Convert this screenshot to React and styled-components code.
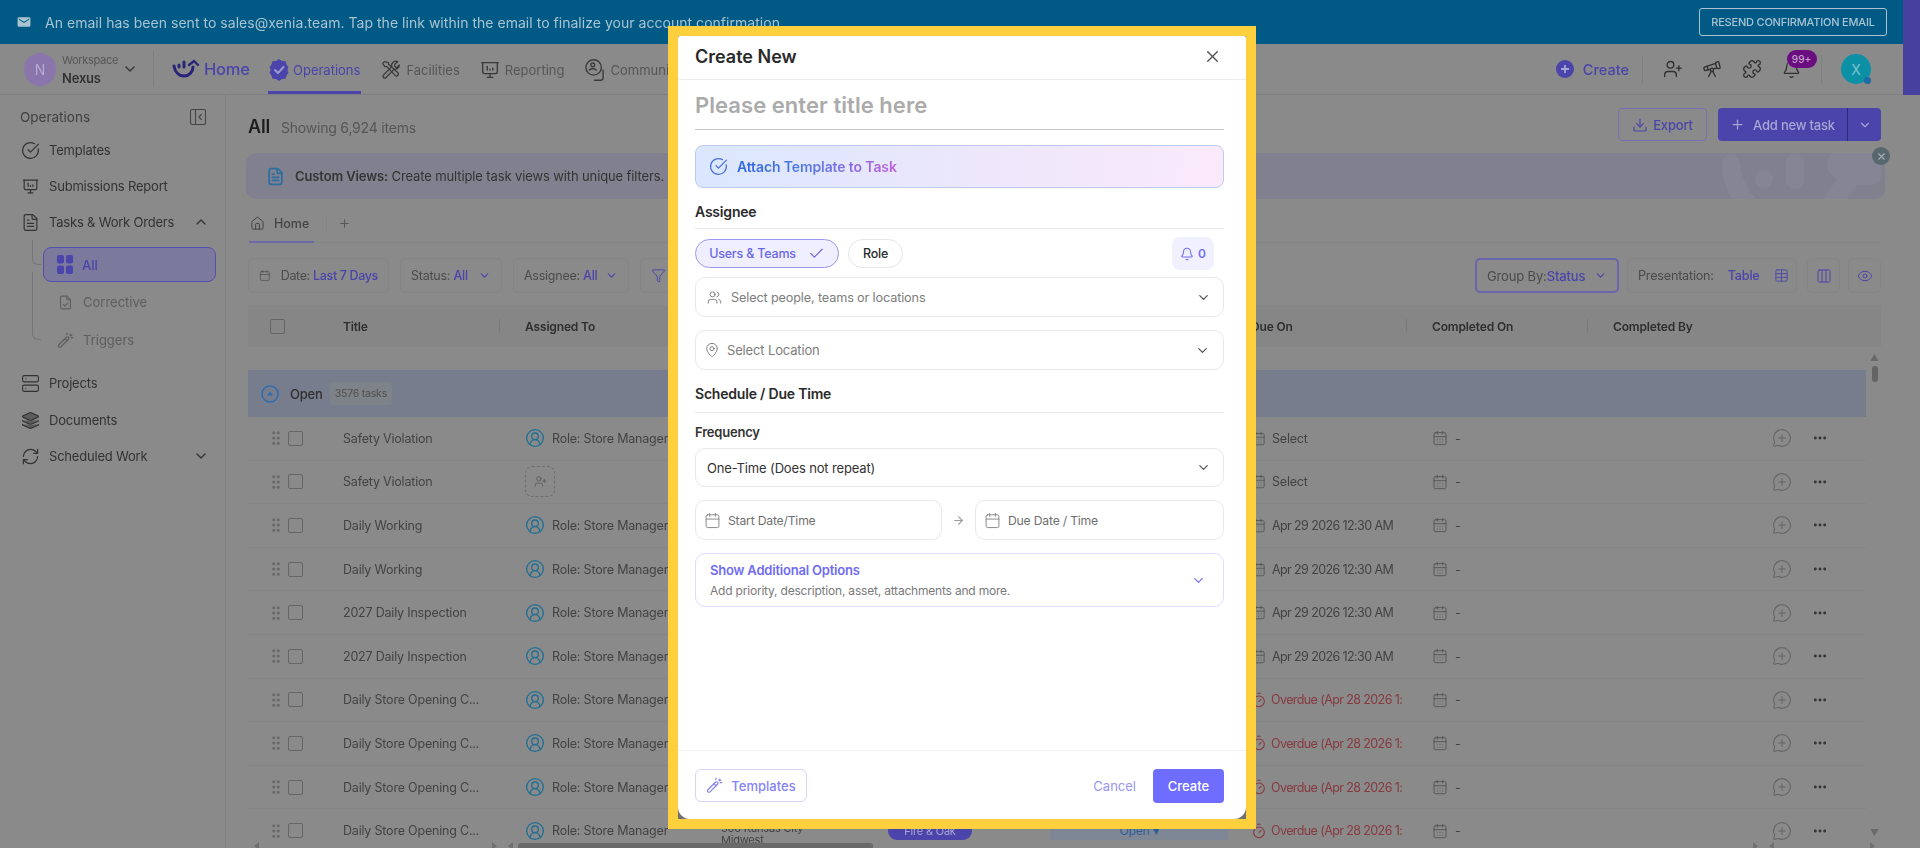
import React from "react";
import styled, { createGlobalStyle } from "styled-components";
import {
  ChevronDown, ChevronUp, CircleCheckBig, FileText, Layers, Server, RefreshCw,
  PanelLeftClose, UserPlus, Telescope, Puzzle, Bell, Download, Plus, Table, Columns3, Eye, Calendar, CalendarDays,
  CircleUserRound, MessageCirclePlus, Ellipsis, Timer, GripVertical, X, Check, Users, MapPin, ArrowRight, Filter,
  House,
} from "lucide-react";
import { TbPresentationAnalytics, TbFileCheck } from "react-icons/tb";

const c = {
  page: "#8a8a8a", line: "#7f7f7f", soft: "#858585", text: "#333333", mute: "#565656", faint: "#5e5e5e",
  primary: "#4a44ab", teal: "#1f6f94", red: "#873a3f",
};
const font = `Inter, "Noto Sans", "Liberation Sans", sans-serif`;

const Global = createGlobalStyle`
  html, body { margin: 0; padding: 0; width: 1920px; height: 848px; overflow: hidden; background: ${c.page}; }
  * { box-sizing: border-box; }
  body { font-family: ${font}; color: ${c.text}; }
`;

const Shell = styled.div`display: flex; width: 1920px; height: 848px; overflow: hidden; filter: blur(0.45px);`;
const Page = styled.div`width: 1903px; height: 848px; display: flex; flex-direction: column;`;
const Rail = styled.div`width: 17px; height: 95px; background: #48409f;`;

const Banner = styled.div`
  height: 44px; background: #005a85; display: flex; align-items: center; padding: 0 16px 0 17px; color: #a9c3d1; flex: none;
`;
const BannerText = styled.span`font-size: 14px; margin-left: 14px; letter-spacing: 0.03px;`;
const Resend = styled.div`
  margin-left: auto; width: 188px; height: 28px; border: 1px solid #a9c3d1; border-radius: 3px; font-size: 11px; font-weight: 500;
  display: flex; align-items: center; justify-content: center; white-space: nowrap; letter-spacing: -0.2px;
`;

const Header = styled.header`
  height: 51px; display: flex; align-items: center; border-bottom: 1px solid ${c.line}; flex: none; padding-left: 24px; position: relative;
`;
const WsAvatar = styled.div`
  width: 32px; height: 33px; border-radius: 50%; background: #8a76ad; color: #b7a9d2; font-size: 14px; display: flex; align-items: center; justify-content: center;
`;
const WsInfo = styled.div`margin-left: 6px; width: 60px; display: flex; flex-direction: column; gap: 3px;`;
const WsLabel = styled.span`font-size: 11px; color: ${c.mute}; letter-spacing: -0.3px;`;
const WsName = styled.span`font-size: 13px; font-weight: 600; color: ${c.text}; letter-spacing: -0.2px;`;
const VLine = styled.div`width: 1px; height: ${p => p.$h || 36}px; background: ${c.line}; margin: ${p => p.$m || "0"};`;
const HomeLink = styled.div`display: flex; align-items: center; gap: 4px; font-size: 16.5px; font-weight: 500; color: ${c.primary}; width: 96px; letter-spacing: -0.2px;`;
const Nav = styled.nav`display: flex; height: 100%;`;
const NavItem = styled.div`
  display: flex; align-items: center; gap: ${p => p.$gap || 4}px; font-size: 13px; padding: 1px 1px 0; margin-right: ${p => p.$mr ?? 19}px; height: 50px;
  color: ${p => (p.$active ? c.primary : c.mute)}; position: relative; letter-spacing: 0;
  box-shadow: ${p => (p.$active ? `inset 0 -3px 0 ${c.primary}` : "none")};
  svg { color: ${p => (p.$active ? c.primary : "#3a3a3a")}; }
`;
const HeadRight = styled.div`margin-left: auto; display: flex; align-items: center; padding-right: 32px; height: 100%;`;
const CreateLink = styled.div`display: flex; align-items: center; gap: 9px; font-size: 14.5px; font-weight: 500; color: ${c.primary}; margin-right: 13px;`;
const HeadIcon = styled.div`width: 39.5px; display: flex; justify-content: center; color: #303030; position: relative;`;
const Badge = styled.span`
  position: absolute; left: 15px; top: -10px; width: 30px; height: 18px; border-radius: 9px; background: #6a0d80; color: #c3a3cb;
  font-size: 10px; font-weight: 500; display: flex; align-items: center; justify-content: center;
`;
const UserDot = styled.div`
  margin-left: 19px; width: 30px; height: 30px; border-radius: 50%; background: #0c90a6; color: #7fc3cf; font-size: 14px;
  display: flex; align-items: center; justify-content: center; position: relative;
  &::after { content: ""; position: absolute; right: 0; bottom: 0; width: 7px; height: 7px; border-radius: 50%; background: #1c6ca8; }
`;

const Body = styled.div`display: flex; flex: 1; min-height: 0;`;
const Side = styled.aside`width: 226px; flex: none; border-right: 1px solid ${c.line}; padding: 10px 9px 0 20px; position: relative;`;
const SideHead = styled.div`display: flex; align-items: center; justify-content: space-between; height: 24px; font-size: 13.5px; margin-bottom: 3px; color: #3f3f3f;`;
const SideItem = styled.div`
  height: 36px; display: flex; align-items: center; gap: 9px; font-size: 13px; color: ${c.text}; padding-left: 1px; letter-spacing: -0.2px;
  svg:last-child:not(:first-child) { margin-left: auto; margin-right: 7px; }
  margin-top: ${p => p.$mt || 0}px;
`;
const SubList = styled.div`
  margin: 3px 0 0 12px; padding-left: 11px; height: 116px; display: flex; flex-direction: column; position: relative;
`;
const TreeLine = styled.span`
  position: absolute; left: 0; top: ${p => p.$top}px; width: 9px; height: ${p => p.$h}px;
  border-left: 1px solid #767676; border-bottom: 1px solid #767676; border-bottom-left-radius: 6px;
`;
const SubActive = styled.div`
  height: 35px; width: 173px; flex: none; margin-top: 4px; border: 1px solid #574fae; border-radius: 8px; background: #7b7a9c; display: flex; align-items: center;
  gap: 9px; padding-left: 13px; font-size: 13px; font-weight: 500; color: ${c.primary};
`;
const SubItem = styled.div`
  height: 38px; flex: none; margin-top: ${p => p.$mt || 0}px; display: flex; align-items: center; gap: 9px; padding-left: 14px; font-size: 13px; color: ${c.faint};
`;

const Main = styled.main`flex: 1; min-width: 0; padding: 13px 22px 0 22px; display: flex; flex-direction: column;`;
const TitleRow = styled.div`height: 33px; display: flex; align-items: center; flex: none;`;
const PageTitle = styled.h1`margin: 4px 0 0; font-size: 18px; font-weight: 600; color: #1d1d1d; letter-spacing: -0.2px;`;
const Showing = styled.span`margin: 5px 0 0 11px; font-size: 14px; color: ${c.mute}; letter-spacing: -0.2px;`;
const TitleActions = styled.div`margin-left: auto; display: flex; gap: 11px;`;
const ExportBtn = styled.div`
  width: 89px; height: 33px; border: 1px solid #7671b2; border-radius: 4px; display: flex; align-items: center; justify-content: center; gap: 5px;
  font-size: 13px; font-weight: 500; color: ${c.primary}; letter-spacing: -0.15px;
`;
const AddBtn = styled.div`
  width: 163px; height: 33px; background: ${c.primary}; border-radius: 4px; display: flex; color: #a8a6d4; font-size: 13px; font-weight: 500; overflow: hidden;
`;
const AddMain = styled.div`width: 130px; display: flex; align-items: center; justify-content: center; gap: 8px; border-right: 1px solid #2f2a78; letter-spacing: -0.2px;`;
const AddArrow = styled.div`flex: 1; display: flex; align-items: center; justify-content: center;`;

const Promo = styled.div`
  height: 46px; margin: 12px -4px 0 -2px; border-radius: 10px; background: #80808f; display: flex; align-items: center; padding-left: 20px; gap: 10px;
  position: relative; flex: none; font-size: 13px; color: #343434; letter-spacing: -0.12px;
  b { font-weight: 600; }
`;
const PromoArt = styled.svg`position: absolute; right: 0; top: 0; width: 165px; height: 46px;`;
const PromoClose = styled.div`
  position: absolute; right: -5px; top: -6px; width: 18px; height: 18px; border-radius: 50%; background: #56686e; color: #a5b1b4;
  display: flex; align-items: center; justify-content: center;
`;

const Tabs = styled.div`height: 44px; flex: none; display: flex; align-items: center; border-bottom: 1px solid ${c.soft}; color: ${c.mute};`;
const HomeTab = styled.div`
  height: 44px; width: 65px; padding: 6px 0 0 1px; margin-left: 1px; display: flex; align-items: center; gap: 9px; font-size: 12.5px; font-weight: 500; color: #444;
  box-shadow: inset 0 -2px 0 #6d69a8;
`;
const TabAdd = styled.div`margin: 6px 0 0 12px; border-left: 1px solid ${c.soft}; padding-left: 11px; height: 16px; display: flex; align-items: center;`;

const Filters = styled.div`height: 35px; margin-top: 15px; display: flex; flex: none; align-items: stretch;`;
const Spacer = styled.div`flex: 1;`;
const Chip = styled.div`
  width: ${p => p.$w}px; margin-right: ${p => p.$mr ?? 11}px; border-style: solid; border-color: ${p => (p.$on ? "#6864ad" : c.soft)}; border-width: ${p => (p.$on ? 2 : 1)}px;
  border-radius: 5px; display: flex; align-items: center; justify-content: ${p => p.$center ? "center" : "flex-start"}; padding: ${p => p.$center ? "0" : `0 ${p.$pr ?? 10}px 0 10px`}; gap: ${p => p.$gap ?? 5}px;
  font-size: ${p => p.$fs || 12.5}px; color: #4b4b4b; letter-spacing: ${p => p.$ls ?? -0.25}px; flex: none; white-space: nowrap;
  em { font-style: normal; color: ${c.primary}; font-weight: 500; }
  svg.end { margin-left: auto; color: ${c.primary}; }
`;

const TableHead = styled.div`
  height: 42px; margin-top: 12px; background: #868686; display: grid; grid-template-columns: ${p => p.$cols}; align-items: center; flex: none;
  font-size: 12px; font-weight: 600; color: #2e2e2e; letter-spacing: -0.15px;
`;
const HCell = styled.div`display: flex; align-items: center; padding-left: ${p => p.$pl || 0}px; position: relative; height: 16px;
  &::after { content: ""; position: absolute; right: ${p => p.$sep ?? 26}px; top: 1px; width: 1px; height: 13px; background: ${p => p.$nosep ? "transparent" : "#7a7a7a"}; }
`;
const Box = styled.span`display: block; width: 15px; height: 15px; border: 1.5px solid #656565; border-radius: 2px; flex: none;`;

const TableArea = styled.div`flex: 1; min-height: 0; display: flex; position: relative; overflow: hidden;`;
const Rows = styled.div`width: 1618px; flex: none; padding-top: 23px;`;
const GroupRow = styled.div`height: 47px; background: #777d8c; display: flex; align-items: center; padding-left: 13px; font-size: 13px; color: #2f2f2f; font-weight: 500; letter-spacing: -0.2px;`;
const GroupName = styled.span`margin-left: 11px;`;
const Count = styled.span`
  margin-left: 7px; height: 23px; padding: 0 5px; background: #7e8289; border-radius: 3px; font-size: 10.5px; display: flex; align-items: center; color: #4f4f4f; font-weight: 400;
`;
const Row = styled.div`
  height: 43.6px; display: grid; grid-template-columns: ${p => p.$cols}; align-items: center; border-bottom: 1px solid #858585; font-size: 12.5px; color: #434343; letter-spacing: -0.2px;
`;
const Pick = styled.div`display: flex; align-items: center; gap: 3px; padding-left: 19px; color: #686868;`;
const Cell = styled.div`display: flex; align-items: center; gap: ${p => p.$gap || 6}px; white-space: nowrap; overflow: hidden; height: 100%; color: ${p => p.$red ? c.red : "inherit"};`;
const DateText = styled.span`letter-spacing: -0.6px;`;
const Unassigned = styled.div`width: 30px; height: 31px; border: 1px dashed #6f6f6f; border-radius: 7px; display: flex; align-items: center; justify-content: center; color: #5a5a5a;`;
const Loc = styled.div`white-space: pre-line; line-height: 12px; font-size: 11px; padding-top: 6px;`;
const Tag = styled.div`width: 84px; height: 18px; background: ${c.primary}; border-radius: 9px; color: #a8a6d4; font-size: 11px; display: flex; align-items: center; justify-content: center;`;
const StatusPill = styled.div`width: 178px; height: 18px; background: #7e8796; color: #2b5f96; font-size: 12px; display: flex; align-items: center; justify-content: center;`;
const RowIcons = styled.div`display: flex; align-items: center; gap: 20px; color: #666; padding-left: 3px;
  svg:last-child { color: #333; }`;
const VScroll = styled.div`
  width: 13px; margin-left: 2px; flex: none; display: flex; flex-direction: column; align-items: center; padding-top: 6px; color: #6a6a6a; font-size: 9px; line-height: 9px;
`;
const Thumb = styled.div`width: 6px; height: 16px; margin-top: 4px; background: #646464; border-radius: 3px;`;
const Down = styled.div`margin-top: auto; margin-bottom: 11px;`;
const HTrack = styled.div`position: absolute; left: 0; right: 0; bottom: 0; height: 5px; display: flex; align-items: center;`;
const HThumb = styled.div`margin-left: 5px; width: 355px; height: 5px; background: #6a6a6a; border-radius: 3px 3px 0 0;`;
const Tri = styled.span`
  width: 0; height: 0; margin-left: ${p => p.$ml}px; border-top: 4px solid transparent; border-bottom: 4px solid transparent;
  ${p => p.$dir === "l" ? "border-right: 5px solid #707070;" : "border-left: 5px solid #707070;"}
`;

/* Modal */
const Backdrop = styled.div`
  position: fixed; inset: 0; display: flex; justify-content: flex-start; align-items: flex-start; padding: 26px 0 0 668px;
`;
const Frame = styled.div`width: 588px; height: 803px; border: 10px solid #ffd03d; background: #707070;`;
const Modal = styled.section`
  width: 100%; height: 100%; background: #fff; border-radius: 2px 2px 12px 12px; display: flex; flex-direction: column; color: #1f1f1f;
`;
const ModalHead = styled.div`
  height: 44px; flex: none; border-bottom: 1px solid #ececec; display: flex; align-items: center; justify-content: space-between; padding: 0 24px 2px 17px;
  font-size: 18px; font-weight: 600; letter-spacing: 0; color: #2a2a2a;
  svg { color: #555; }
`;
const ModalBody = styled.div`flex: 1; padding: 0 22px 0 17px; display: flex; flex-direction: column;`;
const TitleField = styled.div`
  height: 50px; flex: none; border-bottom: 1px solid #c8c8c8; display: flex; align-items: center; font-size: 22px; font-weight: 600; color: #ababab; letter-spacing: 0.05px;
`;
const Attach = styled.div`
  height: 43px; margin-top: 15px; flex: none; border-radius: 8px; border: 1px solid #bccbed; background: linear-gradient(95deg, #dae7fe 0%, #efe7fb 60%, #fae9fb 100%);
  display: flex; align-items: center; gap: 9px; padding-left: 13px; color: #4a72d8;
`;
const AttachText = styled.span`
  font-size: 14px; font-weight: 600; letter-spacing: -0.12px; background: linear-gradient(90deg, #2f66dd 0%, #4f7be0 40%, #c05de0 100%);
  -webkit-background-clip: text; background-clip: text; color: transparent;
`;
const Section = styled.div`
  height: ${p => p.$h}px; margin-top: ${p => p.$mt || 0}px; padding-top: ${p => p.$pt || 0}px; flex: none; border-bottom: 1px solid #e6e6e6; font-size: 14px; font-weight: 600; color: #2a2a2a; letter-spacing: -0.2px;
`;
const PillRow = styled.div`height: 33px; margin-top: 8px; flex: none; display: flex; align-items: center; gap: 9px;`;
const Pill = styled.div`
  height: 29px; width: ${p => p.$w}px; border-radius: 15px; border: 1px solid ${p => p.$on ? "#9b97f0" : "#e6e6e6"}; background: ${p => p.$on ? "#f0efff" : "#fff"};
  color: ${p => p.$on ? "#6a68e8" : "#2a2a2a"}; font-size: 12.5px; font-weight: 500; display: flex; align-items: center; justify-content: center; gap: 12px; letter-spacing: -0.2px;
`;
const BellChip = styled.div`
  margin-left: auto; margin-right: 10px; width: 42px; height: 33px; border-radius: 8px; background: #f1f0ff; color: #7370f0; font-size: 12px; font-weight: 600;
  display: flex; align-items: center; justify-content: center; gap: 4px;
`;
const Select = styled.div`
  height: ${p => p.$h || 40}px; margin-top: ${p => p.$mt}px; flex: none; border: 1px solid #e8e8e8; border-radius: 10px; display: flex; align-items: center;
  gap: ${p => p.$gap || 8}px; padding: 0 ${p => p.$pr ?? 12}px 0 ${p => p.$pl || 11}px; font-size: ${p => p.$fs || 12.7}px; color: ${p => p.$dark ? "#333" : "#7d7d7d"}; letter-spacing: -0.15px;
  svg { color: #7a7a7a; flex: none; }
  svg.end { margin-left: auto; color: #555; }
`;
const Frequency = styled.div`height: 35px; flex: none; padding-top: 11px; font-size: 13px; font-weight: 600; color: #333; letter-spacing: -0.2px;`;
const DateRow = styled.div`height: 40px; margin-top: 13px; flex: none; display: flex; align-items: center; gap: 10px; color: #9a9a9a;`;
const DateBox = styled.div`
  height: 40px; width: ${p => p.$w}px; border: 1px solid #e8e8e8; border-radius: 10px; display: flex; align-items: center; gap: 7px; padding-left: 8px; font-size: 12.2px; color: #6f6f6f; letter-spacing: -0.2px;
  svg { color: #8a8a8a; }
`;
const More = styled.div`
  height: 54px; margin-top: 13px; flex: none; border: 1px solid #dedcfa; border-radius: 10px; padding: 0 17px 0 14px; display: flex; align-items: center; justify-content: space-between; color: #7a77ee;
`;
const MoreText = styled.div`display: flex; flex-direction: column; gap: 5px;`;
const MoreTitle = styled.span`font-size: 13px; font-weight: 600; color: #6f6cf0; letter-spacing: -0.2px;`;
const MoreSub = styled.span`font-size: 12px; color: #7a7a7a; letter-spacing: -0.2px;`;
const ModalFoot = styled.div`
  height: 69px; flex: none; border-top: 1px solid #f1f1f1; padding: 18px 22px 0 17px; display: flex; align-items: flex-start;
`;
const TemplatesBtn = styled.div`
  width: 112px; height: 33px; border: 1px solid #d6d5f8; border-radius: 6px; display: flex; align-items: center; justify-content: center; gap: 8px; font-size: 13px; font-weight: 500; color: #8583f2; letter-spacing: 0;
`;
const Cancel = styled.div`margin-left: auto; height: 34px; display: flex; align-items: center; font-size: 13px; color: #9997ef; margin-right: 17px;`;
const CreateBtn = styled.div`width: 71px; height: 34px; border-radius: 4px; background: #6e6dff; color: #fff; font-size: 13px; font-weight: 500; display: flex; align-items: center; justify-content: center;`;

const Mail = () => (
  <svg width="14" height="14" viewBox="0 0 24 24" fill="#a9c3d1"><path d="M3 4h18a2 2 0 0 1 2 2v12a2 2 0 0 1-2 2H3a2 2 0 0 1-2-2V6a2 2 0 0 1 2-2zm0 3.5 9 6 9-6V6l-9 5.500L3 6z" /></svg>
);
const Logo = () => (
  <svg width="28" height="20" viewBox="0 0 28 20" fill="none" stroke="#2a2478" strokeWidth="3" strokeLinecap="round">
    <path d="M2 7c1 6 5 10 10 10s9-4 9-9" /><path d="M12 3v5" /><path d="M7 6v2" /><path d="M17 6l5-4 4 4" strokeWidth="2.4" />
  </svg>
);
const OpsIcon = () => (
  <svg width="20" height="24" viewBox="0 0 20 24"><path d="M10 1l3 2 3.500.3 1 3.300 2 2.600L18.300 12l1.200 2.800-2 2.600-1 3.300L13 21l-3 2-3-2-3.500-.3-1-3.300-2-2.600L1.700 12 .5 9.200l2-2.600 1-3.300L7 3z" fill={c.primary} /><path d="M6 12l3 3 5.500-6" stroke="#9b98d0" strokeWidth="2" fill="none" strokeLinecap="round" strokeLinejoin="round" /></svg>
);
const Tools = () => (
  <svg width="20" height="22" viewBox="0 0 24 24" fill="none" stroke="currentColor" strokeWidth="1.500" strokeLinejoin="round"><path d="M4 2 2 4l2.500 4H7l10 10.500a2.200 2.200 0 0 0 3.200-3.200L9 5V3z" /><path d="M20 2l-3.500 3v2.500L18.500 9.500 22 6a5 5 0 0 1-6 5L6 21a2.100 2.100 0 0 1-3-3L13 8a5 5 0 0 1 7-6z" /></svg>
);
const Comm = () => (
  <svg width="21" height="24" viewBox="0 0 24 28" fill="none" stroke="currentColor" strokeWidth="1.600" strokeLinecap="round"><circle cx="11" cy="11" r="9" /><circle cx="10" cy="8" r="2.200" /><path d="M6 14c2-2 6-2 8 0" /><path d="M22 14v9a3 3 0 0 1-3 3h-7" /></svg>
);
const OpenIcon = () => (
  <svg width="18" height="18" viewBox="0 0 18 18"><circle cx="9" cy="9" r="8" fill="none" stroke="#2e6cb0" strokeWidth="1.500" /><path d="M9 6.500l3 4H6z" fill="#2e6cb0" /></svg>
);
const AllIcon = () => (
  <svg width="16" height="19" viewBox="0 0 16 19" fill={c.primary}><rect width="7" height="8.500" rx="2" /><rect x="9" width="7" height="8.500" rx="2" /><rect y="10.500" width="7" height="8.500" rx="2" /><rect x="9" y="10.500" width="7" height="8.500" rx="2" /></svg>
);
const Wand = ({ size = 16 }) => (
  <svg width={size} height={size} viewBox="0 0 18 18" fill="none" stroke="currentColor" strokeWidth="1.300" strokeLinecap="round" strokeLinejoin="round">
    <path d="M2 13.500 10 5.500a1.500 1.500 0 0 1 2.200 2.200l-8 8A1.500 1.500 0 0 1 2 13.500z" /><path d="M8.500 7 10.800 9.200" />
    <path d="M14 2.200v1.600M16.600 6h-1.500M15.700 3l-1.100 1M10.500 1.200v1.500" />
  </svg>
);
const Art = () => (
  <PromoArt viewBox="0 0 165 46" fill="#858594">
    <path d="M2 12c0-14 18-14 18 0 2 14 8 26 16 34H12C6 36 2 24 2 12z" />
    <circle cx="44" cy="26" r="9" />
    <rect x="66" y="0" width="18" height="36" rx="9" />
    <path d="M113 0h36c8 0 12 6 12 14v8c0 6-4 10-12 10h-12l-10 14h-24l14-20c-10-4-14-20-4-26z" />
  </PromoArt>
);

const gridCols = "95px 182px 196px 167px 162px 201px 181px 181px 156px 97px";
const headCols = "95px 182px 196px 167px 162px 201px 181px 181px 156px 112px";

const sideTop = [
  [CircleCheckBig, "Templates"],
  [TbPresentationAnalytics, "Submissions Report"],
];

const rowsData = [
  { t: "Safety Violation", a: true, due: "Select" },
  { t: "Safety Violation", a: false, due: "Select" },
  { t: "Daily Working", a: true, due: "Apr 29 2026 12:30 AM", num: true },
  { t: "Daily Working", a: true, due: "Apr 29 2026 12:30 AM", num: true },
  { t: "2027 Daily Inspection", a: true, due: "Apr 29 2026 12:30 AM", num: true },
  { t: "2027 Daily Inspection", a: true, due: "Apr 29 2026 12:30 AM", num: true },
  { t: "Daily Store Opening C...", a: true, od: true },
  { t: "Daily Store Opening C...", a: true, od: true },
  { t: "Daily Store Opening C...", a: true, od: true },
  { t: "Daily Store Opening C...", a: true, od: true, last: true },
];

export default function App() {
  return (
    <Shell>
      <Global />
      <Page>
        <Banner>
          <Mail />
          <BannerText>An email has been sent to sales@xenia.team. Tap the link within the email to finalize your account confirmation.</BannerText>
          <Resend>RESEND CONFIRMATION EMAIL</Resend>
        </Banner>
        <Header>
          <WsAvatar>N</WsAvatar>
          <WsInfo><WsLabel>Workspace</WsLabel><WsName>Nexus</WsName></WsInfo>
          <ChevronDown size={16} color="#333" />
          <VLine $m="0 18px 0 15px" />
          <HomeLink><Logo />Home</HomeLink>
          <Nav>
            <NavItem $active><OpsIcon />Operations</NavItem>
            <NavItem $gap={5} $mr={17}><Tools />Facilities</NavItem>
            <NavItem $gap={4} $mr={18}><TbPresentationAnalytics size={22} strokeWidth={1.5} />Reporting</NavItem>
            <NavItem $gap={5}><Comm />Communi</NavItem>
          </Nav>
          <HeadRight>
            <CreateLink>
              <svg width="18" height="18" viewBox="0 0 18 18"><circle cx="9" cy="9" r="9" fill={c.primary} /><path d="M9 5v8M5 9h8" stroke="#a8a6d4" strokeWidth="1.800" /></svg>
              Create
            </CreateLink>
            <VLine $h={28} $m="0 10px 0 0" />
            <HeadIcon><UserPlus size={20} strokeWidth={1.6} /></HeadIcon>
            <HeadIcon><Telescope size={20} strokeWidth={1.6} /></HeadIcon>
            <HeadIcon><Puzzle size={20} strokeWidth={1.6} /></HeadIcon>
            <HeadIcon><Bell size={19} strokeWidth={1.6} /><Badge>99+</Badge></HeadIcon>
            <VLine $h={28} $m="0 0 0 10px" />
            <UserDot>X</UserDot>
          </HeadRight>
        </Header>
        <Body>
          <Side>
            <SideHead>Operations<PanelLeftClose size={20} strokeWidth={1.3} color="#444" style={{ marginRight: 8 }} /></SideHead>
            {sideTop.map(([I, t]) => (<SideItem key={t}><I size={19} strokeWidth={1.5} />{t}</SideItem>))}
            <SideItem><FileText size={19} strokeWidth={1.5} />Tasks &amp; Work Orders<ChevronUp size={16} /></SideItem>
            <SubList>
              <TreeLine $top={-3} $h={25} />
              <TreeLine $top={29} $h={68} />
              <SubActive><AllIcon />All</SubActive>
              <SubItem $mt={1}><TbFileCheck size={17} strokeWidth={1.5} />Corrective</SubItem>
              <SubItem><Wand size={17} />Triggers</SubItem>
            </SubList>
            <SideItem $mt={6}><Server size={19} strokeWidth={1.4} />Projects</SideItem>
            <SideItem $mt={1}><Layers size={19} strokeWidth={1.5} fill="#5d5d5d" />Documents</SideItem>
            <SideItem><RefreshCw size={19} strokeWidth={1.5} />Scheduled Work<ChevronDown size={16} /></SideItem>
          </Side>
          <Main>
            <TitleRow>
              <PageTitle>All</PageTitle>
              <Showing>Showing 6,924 items</Showing>
              <TitleActions>
                <ExportBtn><Download size={16} strokeWidth={1.7} />Export</ExportBtn>
                <AddBtn>
                  <AddMain><Plus size={15} />Add new task</AddMain>
                  <AddArrow><ChevronDown size={14} /></AddArrow>
                </AddBtn>
              </TitleActions>
            </TitleRow>
            <Promo>
              <FileText size={19} color="#2c6ea0" strokeWidth={2.2} />
              <span><b>Custom Views:</b> Create multiple task views with unique filters.</span>
              <Art />
              <PromoClose><X size={11} strokeWidth={2.4} /></PromoClose>
            </Promo>
            <Tabs>
              <HomeTab><House size={15} strokeWidth={1.6} />Home</HomeTab>
              <TabAdd><Plus size={13} /></TabAdd>
            </Tabs>
            <Filters>
              <Chip $w={141} $gap={10} $ls={-0.35}><Calendar size={15} strokeWidth={1.4} /><span>Date: <em>Last 7 Days</em></span></Chip>
              <Chip $w={102}><span>Status: <em>All</em></span><ChevronDown className="end" size={13} /></Chip>
              <Chip $w={116}><span>Assignee: <em>All</em></span><ChevronDown className="end" size={13} /></Chip>
              <Chip $w={44} $mr={0}><Filter size={15} color={c.primary} strokeWidth={1.5} /></Chip>
              <Spacer />
              <Chip $w={144} $mr={8} $on $fs={13} $gap={0} $ls={-0.15}>Group By:<em>Status</em><ChevronDown className="end" size={13} /></Chip>
              <Chip $w={170} $mr={10} $fs={12.7} $gap={14} $pr={7}>Presentation:<em>Table</em><Table className="end" size={15} strokeWidth={1.4} /></Chip>
              <Chip $w={33} $mr={8} $center><Columns3 size={16} color={c.primary} strokeWidth={1.4} /></Chip>
              <Chip $w={33} $mr={0} $center><Eye size={16} color={c.primary} strokeWidth={1.5} /></Chip>
            </Filters>
            <TableHead $cols={headCols}>
              <HCell $pl={22} $nosep><Box /></HCell>
              <HCell $sep={25}>Title</HCell>
              <HCell>Assigned To</HCell>
              <HCell>Location</HCell>
              <HCell>Type</HCell>
              <HCell $sep={24}>Status</HCell>
              <HCell $sep={25}>Due On</HCell>
              <HCell $sep={25}>Completed On</HCell>
              <HCell $nosep>Completed By</HCell>
              <HCell $nosep />
            </TableHead>
            <TableArea>
              <Rows>
                <GroupRow><OpenIcon /><GroupName>Open</GroupName><Count>3576 tasks</Count></GroupRow>
                {rowsData.map((r, i) => (
                  <Row key={i} $cols={gridCols}>
                    <Pick><GripVertical size={18} strokeWidth={2} /><Box /></Pick>
                    <Cell>{r.t}</Cell>
                    <Cell $gap={7}>
                      {r.a ? (<><CircleUserRound size={20} color={c.teal} strokeWidth={1.6} />Role: Store Manager</>) : (<Unassigned><UserPlus size={13} strokeWidth={1.6} /></Unassigned>)}
                    </Cell>
                    <Cell>{r.last && <Loc>{"500 Kansas City\nMidwest"}</Loc>}</Cell>
                    <Cell>{r.last && <Tag>Fire &amp; Oak</Tag>}</Cell>
                    <Cell>{r.last && <StatusPill>Open ▾</StatusPill>}</Cell>
                    <Cell $red={r.od} $gap={r.od ? 4 : 6}>
                      {r.od ? <Timer size={16} strokeWidth={1.6} /> : <CalendarDays size={15} strokeWidth={1.4} color="#555" />}
                      {r.od ? <DateText>Overdue (Apr 28 2026 1:</DateText> : r.num ? <DateText>{r.due}</DateText> : r.due}
                    </Cell>
                    <Cell $gap={7}><CalendarDays size={16} strokeWidth={1.4} color="#555" />-</Cell>
                    <Cell />
                    <RowIcons><MessageCirclePlus size={20} strokeWidth={1.3} /><Ellipsis size={16} strokeWidth={2.4} /></RowIcons>
                  </Row>
                ))}
              </Rows>
              <VScroll>
                <span>▲</span>
                <Thumb />
                <Down>▼</Down>
              </VScroll>
              <HTrack>
                <Tri $dir="l" $ml={6} />
                <Tri $dir="r" $ml={233} />
                <Tri $dir="l" $ml={11} />
                <HThumb />
                <Tri $dir="r" $ml={880} />
                <Tri $dir="l" $ml={11} />
                <Tri $dir="r" $ml={96} />
              </HTrack>
            </TableArea>
          </Main>
        </Body>
      </Page>
      <Rail />
      <Backdrop>
        <Frame>
          <Modal>
            <ModalHead>Create New<X size={19} strokeWidth={1.8} /></ModalHead>
            <ModalBody>
              <TitleField>Please enter title here</TitleField>
              <Attach><CircleCheckBig size={19} strokeWidth={1.6} /><AttachText>Attach Template to Task</AttachText></Attach>
              <Section $h={29} $mt={12} $pt={3}>Assignee</Section>
              <PillRow>
                <Pill $w={144} $on>Users &amp; Teams<Check size={17} strokeWidth={1.6} /></Pill>
                <Pill $w={55}>Role</Pill>
                <BellChip><Bell size={14} strokeWidth={1.8} />0</BellChip>
              </PillRow>
              <Select $mt={7} $gap={9}><Users size={15} strokeWidth={1.5} />Select people, teams or locations<ChevronDown className="end" size={15} /></Select>
              <Select $mt={13} $pl={8} $pr={13} $gap={7} $fs={13}><MapPin size={16} strokeWidth={1.4} />Select Location<ChevronDown className="end" size={15} /></Select>
              <Section $h={43} $pt={15}>Schedule / Due Time</Section>
              <Frequency>Frequency</Frequency>
              <Select $h={39} $mt={0} $dark $fs={13}>One-Time (Does not repeat)<ChevronDown className="end" size={15} /></Select>
              <DateRow>
                <DateBox $w={247}><Calendar size={17} strokeWidth={1.4} />Start Date/Time</DateBox>
                <ArrowRight size={13} />
                <DateBox $w={248.5}><Calendar size={17} strokeWidth={1.4} />Due Date / Time</DateBox>
              </DateRow>
              <More>
                <MoreText>
                  <MoreTitle>Show Additional Options</MoreTitle>
                  <MoreSub>Add priority, description, asset, attachments and more.</MoreSub>
                </MoreText>
                <ChevronDown size={15} strokeWidth={2.2} />
              </More>
            </ModalBody>
            <ModalFoot>
              <TemplatesBtn><Wand size={17} />Templates</TemplatesBtn>
              <Cancel>Cancel</Cancel>
              <CreateBtn>Create</CreateBtn>
            </ModalFoot>
          </Modal>
        </Frame>
      </Backdrop>
    </Shell>
  );
}
